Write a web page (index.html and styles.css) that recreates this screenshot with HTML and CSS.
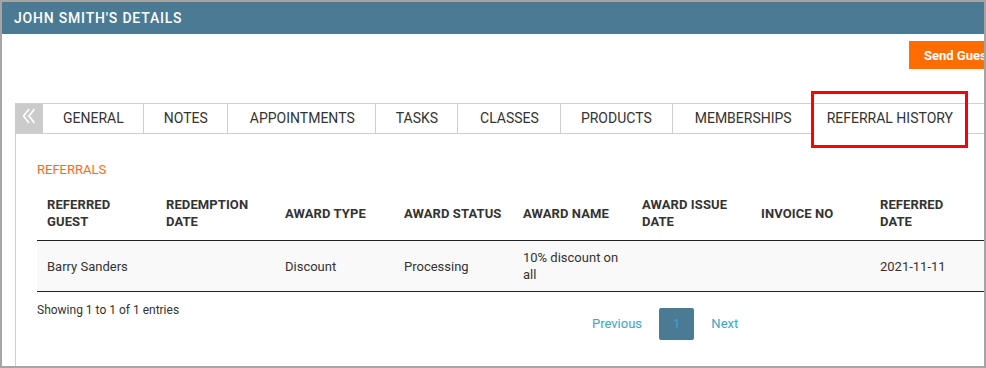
FILE: index.html
```html
<!DOCTYPE html>
<html lang="en">
<head>
    <meta charset="UTF-8">
    <meta name="viewport" content="width=device-width, initial-scale=1.0">
    <title>John Smith's Details</title>
    <link rel="stylesheet" href="styles.css">
</head>
<body>
    <div class="frame">
        <div class="title-bar">JOHN SMITH'S DETAILS</div>

        <div class="sheet">
            <div class="toolbar">
                <button class="btn-orange">Send Guest Invite</button>
            </div>

            <div class="tabs">
                <div class="tab-toggle">
                    <svg width="14" height="16" viewBox="0 0 14 16">
                        <polyline points="7,1 1.5,8 7,15" fill="none" stroke="#fff" stroke-width="1.6"/>
                        <polyline points="12.5,1 7,8 12.5,15" fill="none" stroke="#fff" stroke-width="1.6"/>
                    </svg>
                </div>
                <div class="tab">GENERAL</div>
                <div class="tab">NOTES</div>
                <div class="tab wide">APPOINTMENTS</div>
                <div class="tab">TASKS</div>
                <div class="tab wider">CLASSES</div>
                <div class="tab roomy">PRODUCTS</div>
                <div class="tab wider">MEMBERSHIPS</div>
                <div class="tab active">REFERRAL HISTORY</div>
            </div>

            <div class="panel">
                <div class="section-label">REFERRALS</div>
                <table class="grid-table">
                    <thead>
                        <tr>
                            <th>REFERRED GUEST</th>
                            <th>REDEMPTION DATE</th>
                            <th>AWARD TYPE</th>
                            <th>AWARD STATUS</th>
                            <th>AWARD NAME</th>
                            <th>AWARD ISSUE DATE</th>
                            <th>INVOICE NO</th>
                            <th class="narrow">REFERRED DATE</th>
                        </tr>
                    </thead>
                    <tbody>
                        <tr>
                            <td>Barry Sanders</td>
                            <td></td>
                            <td>Discount</td>
                            <td>Processing</td>
                            <td>10% discount on all</td>
                            <td></td>
                            <td></td>
                            <td>2021-11-11</td>
                        </tr>
                    </tbody>
                </table>

                <div class="table-footer">
                    <div class="info">Showing 1 to 1 of 1 entries</div>
                    <div class="pager">
                        <a class="page-link">Previous</a>
                        <a class="page-link current">1</a>
                        <a class="page-link">Next</a>
                    </div>
                </div>
            </div>
        </div>

        <div class="highlight"></div>
    </div>
</body>
</html>
```

FILE: styles.css
```css
body {
    margin: 0;
    font-family: Roboto, "Liberation Sans", Arial, sans-serif;
    color: #333;
    background-color: #fff;
}
.frame {
    position: relative;
    width: 986px;
    height: 368px;
    box-sizing: border-box;
    border: 2px solid #a5a5a5;
    overflow: hidden;
}
.title-bar {
    height: 32px;
    line-height: 32px;
    padding-left: 12px;
    background-color: #4a7a94;
    color: #fff;
    font-size: 14px;
    font-weight: 500;
    letter-spacing: 0.8px;
}
.sheet {
    width: 1100px;
    padding-left: 13px;
}
.toolbar {
    display: flex;
    justify-content: flex-end;
    padding: 7px 55px 0 0;
}
.btn-orange {
    width: 151px;
    height: 28px;
    padding: 0 15px;
    text-align: left;
    border: none;
    background-color: #ff6d00;
    color: #fff;
    font-family: inherit;
    font-size: 13px;
    font-weight: 700;
}
.tabs {
    display: flex;
    align-items: flex-start;
    margin-top: 34px;
    height: 29px;
    border-top: 1px solid #cfcfcf;
    border-bottom: 1px solid #cfcfcf;
}
.tab-toggle {
    width: 28px;
    height: 29px;
    background-color: #cbcbcb;
    padding: 4px 0 0 7px;
    box-sizing: border-box;
}
.tab {
    height: 29px;
    padding: 0 19px 0 20px;
    line-height: 29px;
    font-size: 14px;
    color: #333;
    border-right: 1px solid #cfcfcf;
}
.tab.roomy {
    padding: 0 20px 0 20px;
}
.tab.wide {
    padding: 0 20px 0 22px;
}
.tab.wider {
    padding: 0 21px 0 22px;
}
.tab.wider:first-of-type {
    padding: 0 21px 0 23px;
}
.tab.active {
    height: 30px;
    background-color: #fff;
    padding: 0 12px 0 13px;
}
.panel {
    border-left: 1px solid #cfcfcf;
    padding: 28px 0 40px 21px;
}
.section-label {
    color: #ff6a13;
    font-size: 13px;
    line-height: 15px;
    margin-bottom: 9px;
}
.grid-table {
    border-collapse: collapse;
    table-layout: fixed;
    width: 952px;
}
.grid-table th,
.grid-table td {
    width: 99px;
    text-align: left;
    vertical-align: middle;
    font-size: 13px;
    line-height: 17px;
    color: #333;
}
.grid-table th {
    padding: 10px 10px;
    font-weight: 700;
    letter-spacing: 0.1px;
    border-bottom: 1px solid #222;
}
.grid-table th.narrow {
    padding-right: 24px;
    width: 85px;
}
.grid-table td {
    padding: 8px 10px;
    background-color: #f9f9f9;
    border-bottom: 1px solid #222;
}
.table-footer {
    display: grid;
    grid-template-columns: 547px 1fr;
    align-items: start;
    margin-top: 10px;
}
.info {
    font-size: 12px;
    line-height: 17px;
    color: #333;
}
.pager {
    display: flex;
    align-items: center;
    gap: 9px;
    margin-top: 6px;
}
.page-link {
    padding: 0 8px;
    font-size: 13px;
    line-height: 32px;
    color: #3aa6c9;
}
.page-link.current {
    padding: 0 14px;
    background-color: #4a7a94;
    border-radius: 2px;
}
.highlight {
    position: absolute;
    left: 809px;
    top: 89px;
    width: 151px;
    height: 51px;
    border: 3px solid #ff0000;
}
```
